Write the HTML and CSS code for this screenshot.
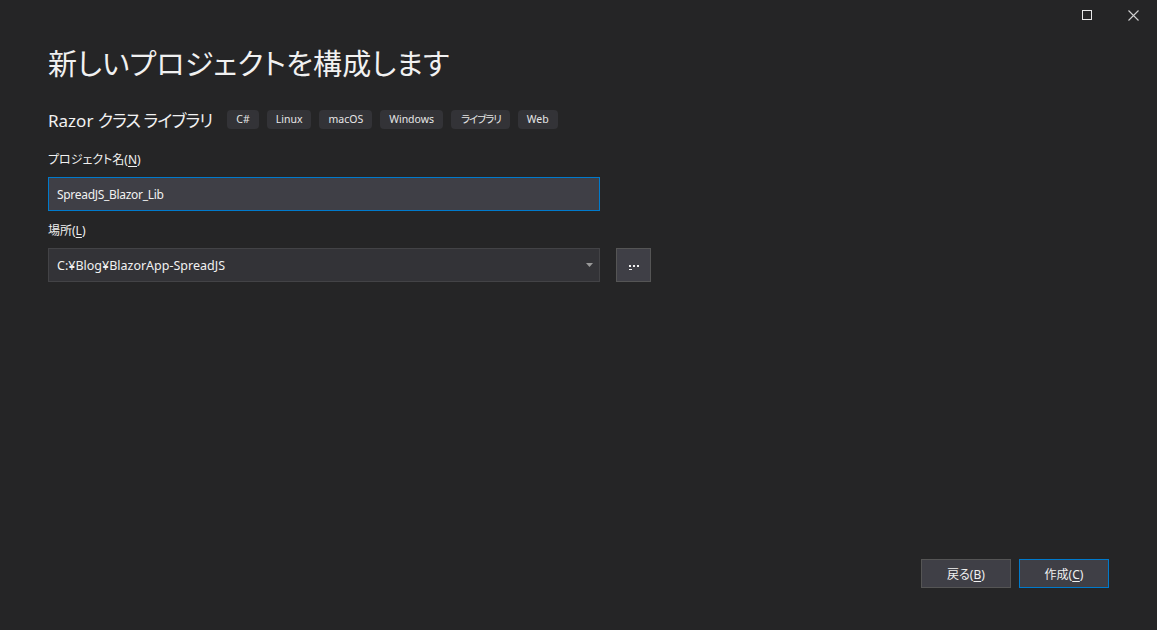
FILE: index.html
```html
<!DOCTYPE html>
<html lang="ja">
<head>
  <meta charset="UTF-8">
  <title>新しいプロジェクトを構成します</title>
  <link rel="stylesheet" href="styles.css">
</head>
<body>

  <!-- タイトルバーのボタン -->
  <div class="titlebar">
    <div class="win-btn">
      <svg width="10" height="10" viewBox="0 0 10 10"><rect x="0.5" y="0.5" width="9" height="9" fill="none" stroke="#e8e8e8" stroke-width="1"/></svg>
    </div>
    <div class="win-btn">
      <svg width="11" height="11" viewBox="0 0 11 11"><path d="M0.5 0.5 L10.5 10.5 M10.5 0.5 L0.5 10.5" stroke="#d0d0d0" stroke-width="1.1"/></svg>
    </div>
  </div>

  <div class="page">
    <div class="content">
      <h1>新しいプロジェクトを構成します</h1>

      <div class="template-row">
        <span class="template-name">Razor <span class="jp">クラス ライブラリ</span></span>
        <div class="tags">
          <span class="tag">C#</span>
          <span class="tag">Linux</span>
          <span class="tag">macOS</span>
          <span class="tag">Windows</span>
          <span class="tag jp">ライブラリ</span>
          <span class="tag">Web</span>
        </div>
      </div>

      <label class="field-label">プロジェクト名(<u>N</u>)</label>
      <div class="text-input focused">SpreadJS_Blazor_Lib</div>

      <label class="field-label">場所(<u>L</u>)</label>
      <div class="location-row">
        <div class="combo">
          <span>C:¥Blog¥BlazorApp-SpreadJS</span>
          <svg class="combo-arrow" width="7" height="4" viewBox="0 0 7 4"><path d="M0 0 H7 L3.5 4 Z" fill="#999999"/></svg>
        </div>
        <!-- 参照ボタン：先頭の点にアクセスキーの下線 -->
        <div class="browse">
          <svg width="10" height="6" viewBox="0 0 10 6">
            <rect x="0" y="0" width="2" height="2" fill="#f1f1f1"/>
            <rect x="4" y="0" width="2" height="2" fill="#f1f1f1"/>
            <rect x="8" y="0" width="2" height="2" fill="#f1f1f1"/>
            <rect x="0" y="4" width="3" height="1" fill="#f1f1f1"/>
          </svg>
        </div>
      </div>
    </div>

    <div class="footer">
      <button class="btn">戻る(<u>B</u>)</button>
      <button class="btn primary">作成(<u>C</u>)</button>
    </div>
  </div>

</body>
</html>
```

FILE: styles.css
```css
html, body { height: 100%; }
body {
  margin: 0;
  background: #252526;
  color: #f1f1f1;
  font-family: "Noto Sans", "Noto Sans CJK JP", sans-serif;
  font-feature-settings: "palt";
  overflow: hidden;
}

u { text-decoration: underline; text-underline-offset: 2px; }

/* タイトルバー */
.titlebar {
  display: flex;
  justify-content: flex-end;
  height: 30px;
}
.win-btn {
  width: 47px;
  height: 30px;
  display: flex;
  align-items: center;
  justify-content: center;
}
.win-btn:first-child { width: 48px; margin-right: -1px; }

.page {
  height: 600px;
  display: flex;
  flex-direction: column;
  padding: 0 48px 42px 48px;
  box-sizing: border-box;
}
.content { flex: 1; }

h1 {
  margin: 8px 0 0;
  font-family: "Noto Sans CJK JP", sans-serif;
  font-weight: 400;
  font-size: 29px;
  line-height: 48px;
  letter-spacing: 0.2px;
  color: #f1f1f1;
}

.template-row {
  display: flex;
  align-items: center;
  gap: 15px;
  margin-top: 21px;
  height: 24px;
}
.template-name {
  font-size: 17px;
  color: #f1f1f1;
}
.template-name .jp { letter-spacing: -0.9px; }

.tags { display: flex; gap: 8px; }
.tag {
  background: #333337;
  border-radius: 4px;
  height: 19px;
  line-height: 19px;
  padding: 0 9px;
  font-size: 10.5px;
  color: #e6e6e6;
}
.tag.jp { letter-spacing: -1.1px; padding: 0 9px 0 10px; }

.field-label {
  display: block;
  font-size: 12px;
  line-height: 16px;
  color: #f1f1f1;
  margin-top: 21px;
}

.text-input, .combo {
  box-sizing: border-box;
  width: 552px;
  height: 34px;
  padding: 0 8px;
  display: flex;
  align-items: center;
  font-size: 12.5px;
  color: #f1f1f1;
}
.text-input.focused {
  margin-top: 9px;
  background: #3f3f46;
  border: 1px solid #007acc;
  font-size: 12px;
  letter-spacing: -0.3px;
}

.text-input + .field-label { margin-top: 12px; }

.location-row {
  display: flex;
  gap: 16px;
  margin-top: 9px;
}
.combo {
  background: #333337;
  border: 1px solid #434346;
  justify-content: space-between;
}
.combo-arrow { margin-right: -2px; }

.browse {
  box-sizing: border-box;
  width: 35px;
  height: 34px;
  background: #3f3f46;
  border: 1px solid #555555;
  display: flex;
  align-items: center;
  justify-content: center;
}
.browse svg { margin-top: 6px; }

.footer {
  display: flex;
  justify-content: flex-end;
  gap: 8px;
}
.btn {
  box-sizing: border-box;
  width: 90px;
  height: 29px;
  background: #3f3f46;
  border: 1px solid #555555;
  color: #f1f1f1;
  font-family: "Noto Sans", "Noto Sans CJK JP", sans-serif;
  font-feature-settings: "palt";
  font-size: 12px;
  padding: 0;
}
.btn.primary { border-color: #007acc; }
```
